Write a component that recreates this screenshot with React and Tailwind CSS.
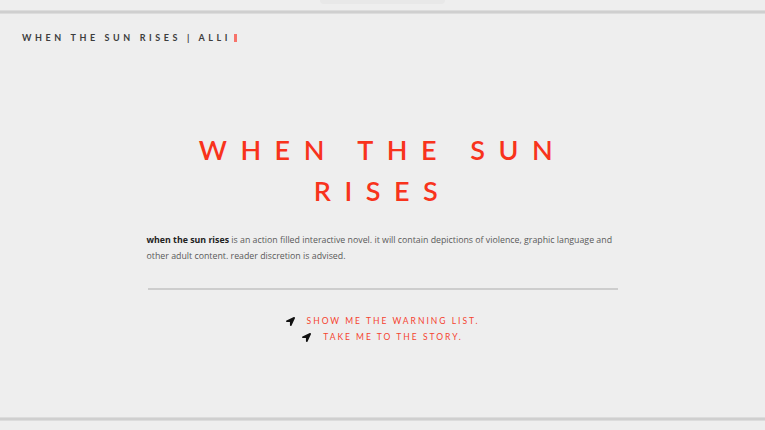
import React from "react";
import { FaLocationArrow } from "react-icons/fa";

function NavLink({ children }) {
  return (
    <a href="#" className="flex items-center gap-[12px] leading-[16px]">
      <FaLocationArrow className="w-[9px] h-[9px] text-[#111]" />
      <span className="text-[8.5px] tracking-[2px] text-[#f5432e]">{children}</span>
    </a>
  );
}

export default function App() {
  return (
    <div
      className="w-[765px] h-[430px] bg-[#eeeeee] flex flex-col overflow-hidden"
      style={{ fontFamily: "Lato, 'Open Sans', sans-serif" }}
    >
      {/* window strip at the top */}
      <div className="h-[10px] flex justify-center">
        <div className="w-[125px] h-[4px] rounded-b-[6px] bg-[#e8e8e8]" />
      </div>
      <div className="h-[4px] bg-[#cfcfcf] border-y border-[#dcdcdc]" />

      {/* page body */}
      <div className="flex-1 flex flex-col">
        <header className="pl-[22px] pt-[17px] flex items-center gap-[3px]">
          <span className="text-[9px] font-bold tracking-[3.6px] text-[#3d3d3d] leading-[14px]">
            WHEN THE SUN RISES | ALLI
          </span>
          <span className="w-[3px] h-[8px] bg-[#f7736a]" />
        </header>

        <main className="flex flex-col items-center pt-[84px]">
          <h1 className="text-[27px] font-semibold tracking-[13.5px] leading-[41px] text-center text-[#f8331c] w-[420px]">
            WHEN THE SUN
            <br />
            RISES
          </h1>

          <p
            className="w-[472px] mt-[21px] text-[8.8px] leading-[16px] text-[#5a5a5a]"
            style={{ fontFamily: "'Open Sans', sans-serif" }}
          >
            <b className="text-[#222] font-bold">when the sun rises</b> is an action filled interactive novel. it will contain depictions of violence, graphic language and other adult content. reader discretion is advised.
          </p>

          <div className="w-[470px] h-[2px] bg-[#cdcdcd] mt-[24px]" />

          <nav className="flex flex-col items-center mt-[23px]">
            <NavLink>SHOW ME THE WARNING LIST.</NavLink>
            <NavLink>TAKE ME TO THE STORY.</NavLink>
          </nav>
        </main>
      </div>

      <div className="h-[4px] bg-[#cfcfcf] border-y border-[#dcdcdc]" />
      <div className="h-[9px]" />
    </div>
  );
}
